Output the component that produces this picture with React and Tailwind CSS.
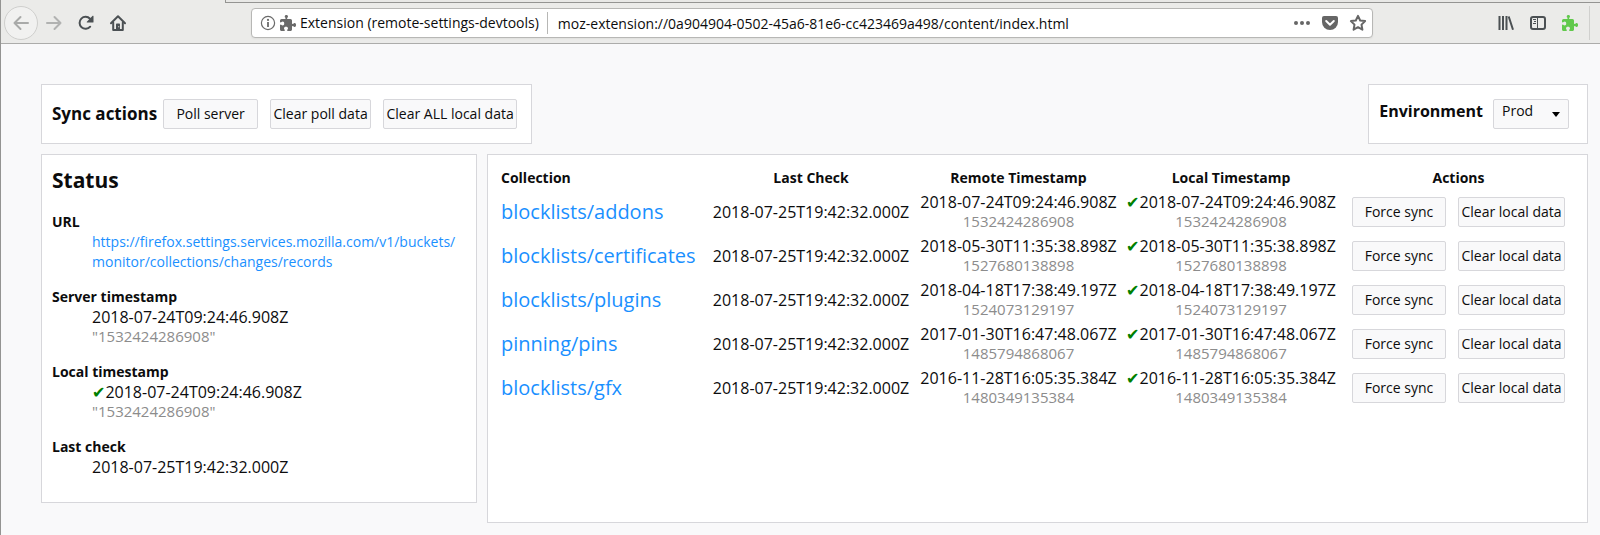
import { useState } from "react";

const CHECKED_AT = "2018-07-25T19:42:32.000Z";

const COLLECTIONS = [
  { name: "blocklists/addons", time: "2018-07-24T09:24:46.908Z", stamp: "1532424286908" },
  { name: "blocklists/certificates", time: "2018-05-30T11:35:38.898Z", stamp: "1527680138898" },
  { name: "blocklists/plugins", time: "2018-04-18T17:38:49.197Z", stamp: "1524073129197" },
  { name: "pinning/pins", time: "2017-01-30T16:47:48.067Z", stamp: "1485794868067" },
  { name: "blocklists/gfx", time: "2016-11-28T16:05:35.384Z", stamp: "1480349135384" },
];

function Icon({ children, className = "" }) {
  return (
    <svg viewBox="0 0 16 16" aria-hidden="true" className={`size-4 shrink-0 overflow-visible ${className}`}>
      {children}
    </svg>
  );
}

const stroke = {
  fill: "none",
  stroke: "currentColor",
  strokeWidth: 2,
  strokeLinecap: "round",
  strokeLinejoin: "round",
};

function ArrowLeft() {
  return (
    <Icon>
      <path {...stroke} d="M15 8H1.500M7.500 2L1.500 8l6 6" />
    </Icon>
  );
}

function ArrowRight() {
  return (
    <Icon>
      <path {...stroke} d="M1 8h13.500M8.500 2l6 6-6 6" />
    </Icon>
  );
}

function Reload() {
  return (
    <Icon>
      <path {...stroke} d="M12.200 11.700A6 6 0 1 1 12 3.800" />
      <path fill="currentColor" d="M15.500 1.200V7a.6.6 0 0 1-.6.6H9.200a.5.5 0 0 1-.35-.85l5.800-5.900a.5.5 0 0 1 .85.35z" />
    </Icon>
  );
}

function Home() {
  return (
    <Icon>
      <path {...stroke} d="M1 8.200L8 1.300l7 6.900" />
      <path {...stroke} d="M3.200 7.500V15h9.600V7.500" />
      <path fill="currentColor" d="M6 15V9.600C6 9 6.400 8.600 7 8.600h2c.6 0 1 .4 1 1V15z" />
      <path fill="#ebebe9" d="M8.200 11.300h1v1h-1z" />
    </Icon>
  );
}

function Puzzle({ className }) {
  return (
    <Icon className={className}>
      <path
        fill="currentColor"
        d="M14.500 8c-.97 0-1 1-1.500 1-.7 0-.99-.3-1-1V5.500A1.500 1.500 0 0 0 10.500 4H8.300C7.400 4 7 3.800 7 3.200c0-.5 1-.6 1-1.700C8 .7 7.300 0 6.500 0h-.3C5.400 0 4.700.7 4.700 1.500c0 1.100 1 1.200 1 1.700 0 .6-.4.800-1.300.800H1.500A1.500 1.500 0 0 0 0 5.500v1.300c0 .5.300.7.800.7.600 0 .8-.9 1.900-.9.900 0 1.500.8 1.500 1.700v.4c0 .9-.6 1.700-1.500 1.700-1.100 0-1.300-.9-1.900-.9-.5 0-.8.2-.8.7v4.300c0 .8.700 1.500 1.500 1.500h2.600c.6 0 .8-.3.8-.8 0-.6-.9-.8-.9-1.900 0-.9.8-1.500 1.700-1.500h.6c.9 0 1.700.6 1.700 1.500 0 1.100-.9 1.300-.9 1.900 0 .5.200.8.800.8h2.600c.8 0 1.500-.7 1.500-1.500V12c0-.7.300-1 1-1 .5 0 .53 1 1.500 1 .8 0 1.500-.7 1.500-1.500v-1C16 8.700 15.300 8 14.500 8z"
      />
    </Icon>
  );
}

function Info() {
  return (
    <Icon>
      <circle cx="8" cy="8" r="6.600" fill="none" stroke="currentColor" strokeWidth="1.200" />
      <path fill="currentColor" d="M7.100 7h1.800v5H7.100z" />
      <circle cx="8" cy="4.900" r="1.100" fill="currentColor" />
    </Icon>
  );
}

function Dots() {
  return (
    <Icon>
      <circle cx="2" cy="8" r="2" fill="currentColor" />
      <circle cx="8" cy="8" r="2" fill="currentColor" />
      <circle cx="14" cy="8" r="2" fill="currentColor" />
    </Icon>
  );
}

function Pocket() {
  return (
    <Icon>
      <path fill="currentColor" d="M2 1h12a2 2 0 0 1 2 2v4a8 8 0 0 1-16 0V3a2 2 0 0 1 2-2z" />
      <path {...stroke} stroke="#fff" d="M4.200 6L8 9.700 11.800 6" />
    </Icon>
  );
}

function Star() {
  return (
    <Icon>
      <path {...stroke} d="M8 .9l2.200 4.600 4.900.6-3.600 3.500.9 5.100L8 12.200l-4.400 2.500.9-5.100L.9 6.100l4.900-.6z" />
    </Icon>
  );
}

function Library() {
  return (
    <Icon>
      <path {...stroke} d="M1.500 1v14M5 1v14M8.500 1v14M10.700 1.500L15 14.700" strokeLinecap="butt" />
    </Icon>
  );
}

function Sidebar() {
  return (
    <Icon>
      <rect x="1" y="2" width="14" height="12" rx="2" {...stroke} />
      <path fill="none" stroke="currentColor" d="M7.500 2v12M3 4.500h3M4 6.500h2M3 8.500h3" />
    </Icon>
  );
}

function ToolButton({ label, className = "", children }) {
  return (
    <button type="button" aria-label={label} className={`flex items-center justify-center ${className}`}>
      {children}
    </button>
  );
}

function BrowserBar() {
  return (
    <header className="border-b border-[#acacaa] bg-[#ebebe9]">
      <div className="flex h-[3px]">
        <div className="w-[224px]" />
        <div className="flex-1 border-b border-l border-[#949492] bg-[#e8e8e6]" />
      </div>
      <div className="flex h-10 items-center pl-[3px] text-[#4b5053]">
        <ToolButton label="Back" className="size-[34px] rounded-full border border-[#cfcfcd] bg-[#f1f1f0] text-[#a9aaa9]">
          <ArrowLeft />
        </ToolButton>
        <nav className="flex items-center gap-4 pl-2">
          <ToolButton label="Forward" className="text-[#b1b2b1]">
            <ArrowRight />
          </ToolButton>
          <ToolButton label="Reload">
            <Reload />
          </ToolButton>
          <ToolButton label="Home">
            <Home />
          </ToolButton>
        </nav>
        <div className="ml-[125px] flex h-[30px] flex-1 items-center rounded border border-[#b7b7b5] bg-white pr-[6px] pl-2 text-sm text-[#0c0c0d] shadow-xs">
          <div className="flex shrink-0 items-center gap-1 text-[#6a6a6a]">
            <Info />
            <Puzzle />
          </div>
          <span className="shrink-0 pr-2 pl-1">Extension (remote-settings-devtools)</span>
          <input
            type="text"
            aria-label="Address"
            defaultValue="moz-extension://0a904904-0502-45a6-81e6-cc423469a498/content/index.html"
            className="h-[22px] min-w-0 flex-1 border-l border-[#b7b7b5] pl-[10px] outline-none"
          />
          <div className="flex items-center gap-3 text-[#666]">
            <ToolButton label="Page actions">
              <Dots />
            </ToolButton>
            <ToolButton label="Save to Pocket">
              <Pocket />
            </ToolButton>
            <ToolButton label="Bookmark this page">
              <Star />
            </ToolButton>
          </div>
        </div>
        <div className="ml-[125px] flex items-center gap-4">
          <ToolButton label="Library">
            <Library />
          </ToolButton>
          <ToolButton label="Sidebars">
            <Sidebar />
          </ToolButton>
          <ToolButton label="Remote settings" className="text-[#61c94c]">
            <Puzzle />
          </ToolButton>
        </div>
        <div className="mr-[10px] ml-[11px] h-[34px] border-l border-[#d0d0ce]" />
      </div>
    </header>
  );
}

function Button({ className = "", children }) {
  return (
    <button
      type="button"
      className={`h-[30px] rounded-xs border border-[#d7d7db] bg-[#f9f9fa] text-sm whitespace-nowrap hover:bg-[#ededf0] ${className}`}
    >
      {children}
    </button>
  );
}

function Panel({ className = "", children }) {
  return <section className={`border border-[#d7d7db] bg-white p-[10px] ${className}`}>{children}</section>;
}

function Check() {
  return <span className="font-['DejaVu_Sans',sans-serif] text-base leading-none text-[#008000]">✔</span>;
}

function Timestamp({ time, stamp, checked }) {
  return (
    <>
      <span className="block h-5 whitespace-nowrap">
        {checked && <Check />}
        {time}
      </span>
      {stamp && <span className="block h-5 text-[15px] leading-[18px] text-[#8c8c8c]">{stamp}</span>}
    </>
  );
}

function StatusItem({ term, children }) {
  return (
    <div>
      <dt className="text-sm leading-5 font-bold">{term}</dt>
      <dd className="pl-10 text-base leading-5">{children}</dd>
    </div>
  );
}

function Status() {
  return (
    <Panel className="w-[436px] shrink-0 pb-[25px]">
      <h2 className="text-[21px] leading-[30px] font-bold">Status</h2>
      <dl className="flex flex-col gap-[15px] pt-[17px]">
        <StatusItem term="URL">
          <a
            href="https://firefox.settings.services.mozilla.com/v1/buckets/monitor/collections/changes/records"
            className="block text-sm leading-5 text-[#1a90ff]"
          >
            https://firefox.settings.services.mozilla.com/v1/buckets/
            <wbr />
            monitor/collections/changes/records
          </a>
        </StatusItem>
        <StatusItem term="Server timestamp">
          <Timestamp time="2018-07-24T09:24:46.908Z" stamp={'"1532424286908"'} />
        </StatusItem>
        <StatusItem term="Local timestamp">
          <Timestamp time="2018-07-24T09:24:46.908Z" stamp={'"1532424286908"'} checked />
        </StatusItem>
        <StatusItem term="Last check">
          <Timestamp time={CHECKED_AT} />
        </StatusItem>
      </dl>
    </Panel>
  );
}

function Collections() {
  return (
    <Panel className="min-w-0 flex-1 pb-[111px]">
      <table className="w-full table-fixed border-separate border-spacing-[2px] text-base leading-5">
        <colgroup>
          <col className="w-[203px]" />
          <col className="w-[212px]" />
          <col className="w-[199px]" />
          <col className="w-[222px]" />
          <col />
        </colgroup>
        <thead>
          <tr className="text-sm leading-5">
            <th className="p-px text-left">Collection</th>
            <th className="p-px">Last Check</th>
            <th className="p-px">Remote Timestamp</th>
            <th className="p-px">Local Timestamp</th>
            <th className="p-px pr-[3px]">Actions</th>
          </tr>
        </thead>
        <tbody>
          {COLLECTIONS.map(({ name, time, stamp }) => (
            <tr key={name} className="text-center">
              <td className="p-px text-left text-xl leading-5 whitespace-nowrap">
                <a href={`#${name}`} className="text-[#1a90ff]">
                  {name}
                </a>
              </td>
              <td className="p-px">{CHECKED_AT}</td>
              <td className="p-px">
                <Timestamp time={time} stamp={stamp} />
              </td>
              <td className="p-px">
                <Timestamp time={time} stamp={stamp} checked />
              </td>
              <td className="p-px pr-[3px]">
                <div className="flex justify-center gap-3">
                  <Button className="w-[94px]">Force sync</Button>
                  <Button className="w-[107px]">Clear local data</Button>
                </div>
              </td>
            </tr>
          ))}
        </tbody>
      </table>
    </Panel>
  );
}

export default function App() {
  const [environment, setEnvironment] = useState("prod");

  return (
    <div className="min-h-screen border-l border-[#949492] bg-[#f9f9fa] font-['Open_Sans','Noto_Sans',sans-serif] text-[#0c0c0d]">
      <BrowserBar />
      <main className="flex flex-col gap-[10px] pt-10 pr-3 pb-3 pl-10">
        <div className="flex items-start justify-between">
          <Panel className="flex h-[60px] items-center pr-[14px]">
            <h3 className="pr-[6px] text-[17px] leading-6 font-bold">Sync actions</h3>
            <div className="flex gap-3">
              <Button className="w-[95px]">Poll server</Button>
              <Button className="w-[101px]">Clear poll data</Button>
              <Button className="w-[134px]">Clear ALL local data</Button>
            </div>
          </Panel>
          <Panel className="flex h-[60px] items-center pr-[18px]">
            <label htmlFor="environment" className="pr-[10px] pb-[6px] text-base leading-6 font-bold">
              Environment
            </label>
            <div className="relative">
              <select
                id="environment"
                value={environment}
                onChange={(event) => setEnvironment(event.target.value)}
                className="block h-[30px] w-[76px] appearance-none rounded-xs border border-[#d7d7db] bg-[#f9f9fa] pb-[6px] pl-2 text-sm"
              >
                <option value="prod">Prod</option>
                <option value="stage">Stage</option>
              </select>
              <svg
                viewBox="0 0 8 5"
                aria-hidden="true"
                className="pointer-events-none absolute right-[9px] bottom-3 h-[5px] w-2"
              >
                <path d="M0 0h8L4 5z" />
              </svg>
            </div>
          </Panel>
        </div>
        <div className="flex items-start gap-[10px]">
          <Status />
          <Collections />
        </div>
      </main>
    </div>
  );
}
